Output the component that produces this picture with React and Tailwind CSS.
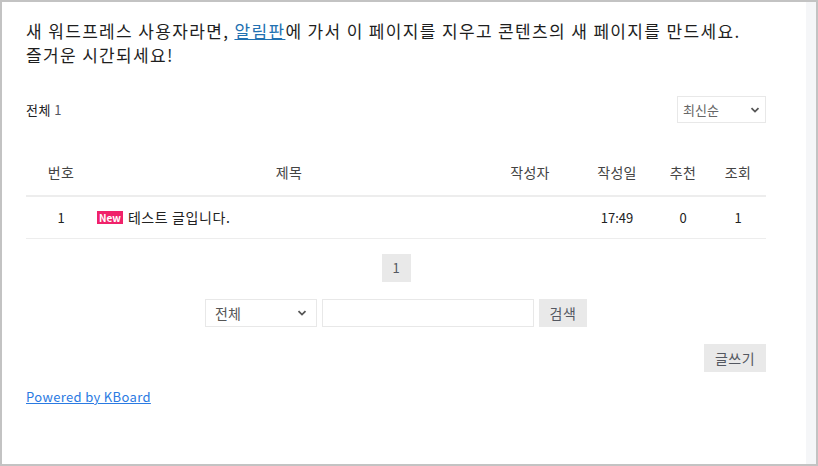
import React from 'react';

const font = { fontFamily: '"Noto Sans CJK KR", "Noto Sans", sans-serif' };

const columns = [
  { key: 'uid', label: '번호', w: 'w-[70px]' },
  { key: 'title', label: '제목', w: 'w-[386px]' },
  { key: 'user', label: '작성자', w: 'w-[96px]' },
  { key: 'date', label: '작성일', w: 'w-[78px]' },
  { key: 'vote', label: '추천', w: 'w-[54px]' },
  { key: 'view', label: '조회', w: 'w-[56px]' },
];

const Chevron = () => (
  <svg width="10" height="10" viewBox="0 0 10 10" className="text-[#555]">
    <path d="M1.5 3.2 L5 6.6 L8.5 3.2" fill="none" stroke="currentColor" strokeWidth="1.8" />
  </svg>
);

export default function App() {
  return (
    <div className="w-[818px] h-[466px] border-2 border-[#c3c3c3] flex bg-white overflow-hidden" style={font}>
      <div className="flex-1 pl-6 pr-10 pt-[17px] text-[#222]">
        {/* intro */}
        <p className="text-[17px] leading-[24px] tracking-[1.35px] text-[#1e1e1e]">
          새 워드프레스 사용자라면, <a href="#" className="text-[#2271b1] underline">알림판</a>에 가서 이 페이지를 지우고 콘텐츠의 새 페이지를 만드세요.
          <br />
          즐거운 시간되세요!
        </p>

        {/* count + sort */}
        <div className="flex justify-between items-center mt-[29px] h-[27px]">
          <div className="text-[13px] tracking-[0.5px] text-[#222]">전체 <span className="text-[#545861]">1</span></div>
          <div className="w-[89px] h-[27px] border border-[#e8e8e8] flex items-center justify-between px-[5px] text-[13px] text-[#666]">
            <span>최신순</span>
            <Chevron />
          </div>
        </div>

        {/* table */}
        <div className="mt-[27px]">
          <div className="flex h-[47px] items-center border-b-2 border-[#ededed] text-[14px] tracking-[0.3px] text-[#444]">
            {columns.map((c) => (
              <div key={c.key} className={`${c.w} text-center`}>{c.label}</div>
            ))}
          </div>
          <div className="flex h-[42px] items-center border-b border-[#ededed] text-[13px] text-[#222]">
            <div className="w-[70px] text-center">1</div>
            <div className="w-[386px] flex items-center pl-px">
              <span className="bg-[#f0226a] text-white text-[10px] font-bold leading-[13px] px-[2px] mr-[5px]">New</span>
              <span className="text-[14px] tracking-[0.6px]">테스트 글입니다.</span>
            </div>
            <div className="w-[96px] text-center"></div>
            <div className="w-[78px] text-center">17:49</div>
            <div className="w-[54px] text-center">0</div>
            <div className="w-[56px] text-center">1</div>
          </div>
        </div>

        {/* pagination */}
        <div className="flex justify-center mt-[15px]">
          <div className="w-[29px] h-[28px] bg-[#e9e9e9] flex items-center justify-center text-[13px] text-[#545861]">1</div>
        </div>

        {/* search */}
        <div className="flex justify-center items-center gap-[5px] mt-[17px]">
          <div className="w-[112px] h-[28px] border border-[#e8e8e8] flex items-center justify-between px-[9px] text-[14px] text-[#555]">
            <span>전체</span>
            <Chevron />
          </div>
          <div className="w-[212px] h-[28px] border border-[#e8e8e8]"></div>
          <div className="w-[48px] h-[28px] bg-[#e9e9e9] flex items-center justify-center text-[14px] tracking-[0.5px] text-[#545861]">검색</div>
        </div>

        {/* write */}
        <div className="flex justify-end mt-[17px]">
          <div className="w-[62px] h-[28px] bg-[#e9e9e9] flex items-center justify-center text-[14px] tracking-[0.5px] text-[#545861]">글쓰기</div>
        </div>

        {/* footer */}
        <div className="mt-[11px]">
          <a href="#" className="text-[13px] tracking-[0.35px] text-[#2a7ae2] underline">Powered by KBoard</a>
        </div>
      </div>
      <div className="w-[10px] bg-[#f5f6f8]"></div>
    </div>
  );
}
